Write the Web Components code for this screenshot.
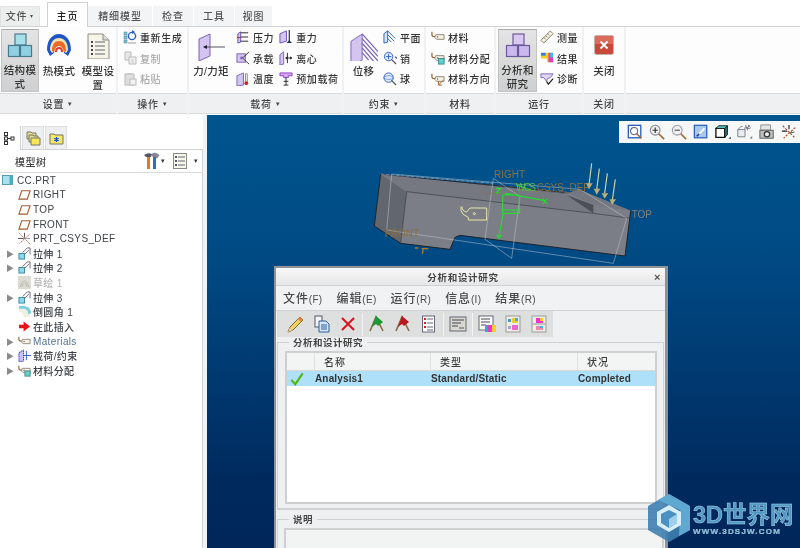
<!DOCTYPE html>
<html lang="zh">
<head>
<meta charset="utf-8">
<title>Creo Simulate</title>
<style>
  html, body { margin: 0; height: 548px; overflow: hidden; background: #fff; }
  body { font-family: "Liberation Sans", "Noto Sans CJK SC", sans-serif; font-weight: 500; color: #3a3a3a; display: flex; flex-direction: column; filter: blur(.3px); }
</style>
</head>
<body>
<script>
// icon table: name -> [viewBox size, svg content]
const cubes = (a, b, s) => `
  <g stroke="${s}" stroke-width="1.2"><rect x="8" y="1" width="11" height="11" fill="${a}"/>
  <rect x="1.5" y="12.5" width="11" height="11" fill="${b}"/><rect x="13.5" y="12.5" width="11" height="11" fill="${b}"/></g>`;
const tag = `<path d="M1 2v3q0 2 2 2h2" fill="none" stroke="#8a5a2a" stroke-width="1.2"/><path d="M5 5h9v5H6l-2-2z" fill="#f4f1e4" stroke="#8a8472"/><circle cx="7" cy="7.5" r=".8" fill="#666"/>`;
const flag = (c) => `<path d="M2 16 8 2l7 14" fill="none" stroke="#8a6a45" stroke-width="1.6"/><path d="M8 1 15 7l-5 4-2-2-4 3z" fill="${c}"/>`;
const ICONS = {
  cubes: [26, cubes("#a8e0ea", "#8fd0e2", "#4a7a90")],
  cubesp: [26, cubes("#d8c8f2", "#cbb8ee", "#6a5a98")],
  thermal: [26, `<path d="M1 17C1 6 7 1 13 1s12 5 12 16l-3 6-4-3q-1-8-5-8t-5 8l-4 3z" fill="#1d55c8"/><path d="M4 17C4 9 8 5 13 5s9 4 9 12l-2 3-3-2q-1-7-4-7t-4 7l-3 2z" fill="#f2e4b0"/><path d="M6 18C6 11 9 8 13 8s7 3 7 10l-2 1q-1-6-5-6t-5 6z" fill="#ef6a28"/><path d="M9 19q0-5 4-5t4 5l-2 0q0-3-2-3t-2 3z" fill="#e83a30"/>`],
  doc: [26, `<path d="M3 1h15l6 6v19H3z" fill="#f6f4e6" stroke="#8d8d82"/><path d="M18 1v6h6" fill="#ddd" stroke="#8d8d82"/><g fill="#445"><rect x="6" y="8" width="2" height="2"/><rect x="6" y="12" width="2" height="2"/><rect x="6" y="16" width="2" height="2"/><rect x="6" y="20" width="2" height="2"/></g><g stroke="#667"><path d="M10 9h10M10 13h10M10 17h10M10 21h10"/></g>`],
  regen: [14, `<g fill="#7bc6dc" stroke="#4a7a90" stroke-width=".5"><rect x="1" y="2" width="3" height="3"/><rect x="1" y="6" width="3" height="3"/><rect x="1" y="10" width="3" height="3"/></g><circle cx="9" cy="6" r="3.6" fill="none" stroke="#2a5fc0" stroke-width="1.4"/><path d="M9 0l3 2-3 2z" fill="#2a5fc0"/><path d="M5 13h8" stroke="#999"/>`],
  copy: [14, `<path d="M2 1h6v8H2z" fill="#e6e6e6" stroke="#bbb"/><path d="M6 6h7v7H6z" fill="#efefef" stroke="#bbb"/><path d="M8 9h3M8 11h3" stroke="#ccc"/>`],
  paste: [14, `<rect x="2" y="2" width="9" height="11" fill="#dedede" stroke="#bbb"/><rect x="4" y="1" width="5" height="2" fill="#ccc"/><rect x="7" y="7" width="6" height="6" fill="#f2f2f2" stroke="#bbb"/>`],
  force: [28, `<path d="M2 6 13 1v22L2 28z" fill="#d3c4f0" stroke="#7b63b5"/><path d="M7 14h21" stroke="#555" stroke-width="1"/><path d="M6 14l4-2v4z" fill="#223"/>`],
  pressure: [15, `<path d="M2 4 5 2v11l-3 1z" fill="#d3c4f0" stroke="#6a4fc0"/><path d="M5 3h8M5 7.5h8M5 12h8" stroke="#222"/><path d="M1 8h4" stroke="#b22"/>`],
  bearing: [15, `<rect x="1" y="3" width="9" height="9" fill="#d3c4f0" stroke="#7b63b5"/><path d="M14 1 7 7.5l7 6.5" fill="none" stroke="#333"/><circle cx="6" cy="7.5" r="1.5" fill="#7b63b5"/>`],
  temp: [15, `<path d="M1 4 8 1v13l-7 1z" fill="#d3c4f0" stroke="#7b63b5"/><rect x="10" y="2" width="2" height="9" fill="#eee" stroke="#555" stroke-width=".6"/><circle cx="11" cy="12" r="2" fill="#c22"/>`],
  gravity: [15, `<path d="M1 4 8 1v11l-7 2z" fill="#d3c4f0" stroke="#6a4fc0"/><path d="M11 0v13" stroke="#223" stroke-width="1.2"/><path d="M8 14h6l-3-3z" fill="#235"/>`],
  centri: [15, `<path d="M1 4 5 1v13l-4 1z" fill="#d3c4f0" stroke="#7b63b5"/><path d="M7 7.5h7M9 2v11" stroke="#222"/><path d="M7 7.5l2-2v4zM14 7.5l-2-2v4z" fill="#222"/>`],
  preload: [15, `<path d="M1 1h13v3h-4v2H5V4H1z" fill="#d8a8f0" stroke="#8a3fc0"/><path d="M7.5 6v8" stroke="#222"/><path d="M5 10h5M5 14h5" stroke="#222"/>`],
  disp: [30, `<path d="M1 9 13 1v28L1 35z" fill="#d3c4f0" stroke="#7b63b5"/><path d="M13 1 30 20M13 6l17 19M13 11l17 19M13 16l12 14M13 21l7 8" stroke="#7b63b5" stroke-width="1.3"/>`],
  plane: [15, `<path d="M1 4 5 1v12l-4 1z" fill="#d6e4f6" stroke="#2a5fc0"/><path d="M5 1l8 8M5 5l7 7M5 9l4 4" stroke="#2a5fc0"/>`],
  pin: [15, `<circle cx="6" cy="6" r="4.5" fill="#e4eefa" stroke="#2a5fc0"/><path d="M3 6h6M6 3v6" stroke="#2a5fc0"/><path d="M9 9l5 5M13 6l2 2" stroke="#556" stroke-width="1.4"/>`],
  ball: [15, `<circle cx="6" cy="6" r="5" fill="#e4eefa" stroke="#2a5fc0"/><ellipse cx="6" cy="6" rx="5" ry="2" fill="none" stroke="#2a5fc0" stroke-width=".6"/><path d="M9 9l5 5" stroke="#556" stroke-width="1.4"/>`],
  tag: [15, tag],
  assign: [15, tag + `<rect x="8" y="8" width="6" height="6" fill="#62d0cc" stroke="#3a8a8a"/>`],
  matdir: [15, tag + `<path d="M8 14l5-5M8 10v4h4" fill="none" stroke="#a05a30"/>`],
  measure: [15, `<path d="M1 11 11 1l3 3L4 14z" fill="#f4f0e6" stroke="#8a7a62"/><path d="M4 8l2 2M6 6l2 2M8 4l2 2" stroke="#8a7a62"/>`],
  result: [15, `<path d="M1 2h13v10H8l-1-4H1z" fill="#f4d020"/><path d="M9 2h5v10H9z" fill="#e03ac0"/><path d="M1 2h5v3H1z" fill="#2a80e0"/><path d="M11 2h3v5h-3z" fill="#3ac0f0"/>`],
  diag: [15, `<path d="M1 2h13l-3 4-3 1-1 3-3-4H1z" fill="#e2d8f6" stroke="#7b63b5"/><path d="M7 10l2 3 5-6" fill="none" stroke="#222" stroke-width="1.3"/>`],
  close: [20, `<rect x=".5" y=".5" width="19" height="19" rx="2" fill="#c8483a" stroke="#c8b0a8"/><rect x="1" y="1" width="18" height="8" fill="#dc6a5a"/><path d="M6.5 6.5l7 7M13.5 6.5l-7 7" stroke="#fff" stroke-width="2"/>`],
  zfit: [18, `<rect x="1.5" y="1.5" width="14" height="14" fill="#fff" stroke="#2a5fc0" stroke-width="1.5"/><circle cx="8" cy="8" r="4" fill="none" stroke="#667" stroke-width="1.2"/><path d="M11 11l5 5" stroke="#a06a30" stroke-width="1.8"/>`],
  zin: [18, `<circle cx="7" cy="7" r="5.5" fill="#eee" stroke="#889" stroke-width="1.2"/><path d="M4 7h6M7 4v6" stroke="#333" stroke-width="1.3"/><path d="M11 11l6 6" stroke="#a06a30" stroke-width="1.8"/>`],
  zout: [18, `<circle cx="7" cy="7" r="5.5" fill="#f2f2f2" stroke="#99a" stroke-width="1.2"/><path d="M4 7h6" stroke="#555" stroke-width="1.3"/><path d="M11 11l6 6" stroke="#a06a30" stroke-width="1.8"/>`],
  repaint: [18, `<rect x="1.5" y="1.5" width="14" height="14" fill="#a8c8ec" stroke="#2a5fc0" stroke-width="1.4"/><path d="M4 14 13 5" stroke="#fff" stroke-width="2"/><path d="M4 14l3-3" stroke="#2a4a90" stroke-width="2"/>`],
  view3d: [18, `<path d="M1 5h10v10H1z" fill="#fff" stroke="#111" stroke-width="1.5"/><path d="M1 5l3-3h10L11 5z" fill="#5cc" stroke="#111"/><path d="M11 5l3-3v10l-3 3z" fill="#2a7a80" stroke="#111"/><path d="M15 17h3v-3z" fill="#667"/>`],
  named: [20, `<path d="M1 7h9v9H1z" fill="#e8eef2" stroke="#667"/><path d="M1 7l4-4h2M10 7l3-3v4" fill="none" stroke="#667"/><text x="9" y="6" font-size="6" font-family="Liberation Sans" fill="#556">AB</text><path d="M16 18h3v-3z" fill="#667"/>`],
  camera: [18, `<path d="M2 1h11v6H2z" fill="#e4e4e4" stroke="#888"/><rect x="1" y="7" width="15" height="9" fill="#bdbdbd" stroke="#555"/><circle cx="9" cy="11.5" r="3" fill="#eee" stroke="#333" stroke-width="1.4"/>`],
  datum: [18, `<path d="M2 2l14 14M16 4 3 16" stroke="#a0522d" stroke-width="1.3" stroke-dasharray="2.5 1.5"/><path d="M1 8h6M9 1v5" stroke="#222" stroke-width="1.3"/><path d="M10 10l5-1" stroke="#444"/>`],
  tabtree: [14, `<g fill="#fff" stroke="#333"><rect x="1.5" y="1.5" width="3" height="3"/><rect x="1.5" y="6" width="3" height="3"/><rect x="8" y="6" width="3" height="3"/><rect x="1.5" y="10.5" width="3" height="3"/></g><path d="M3 5v1M3 9v1M5 7.5h3" stroke="#333"/>`],
  tabfolders: [15, `<path d="M1 1h4l1 1h4v6H1z" fill="#e8e090" stroke="#776"/><path d="M3 4h4l1 1h4v6H3z" fill="#e0dc90" stroke="#776"/><path d="M5 7h9v7H5z" fill="#f8e858" stroke="#776"/>`],
  tabstar: [15, `<path d="M1 3h4l1 1h8v9H1z" fill="#f6e860" stroke="#776"/><path d="M7.5 6v5M5.3 7.2l4.4 2.6M9.7 7.2l-4.4 2.6" stroke="#1a50d8" stroke-width="1.2"/>`],
  hammer: [18, `<path d="M2 3q4-3 8-1l-1 3H4z" fill="#556"/><path d="M5 5h3v12H5z" fill="#e07a20"/><path d="M11 5h3v12h-3z" fill="#2a70c0"/><path d="M10 2l3-1 4 2-2 3-4-1z" fill="#889" stroke="#556" stroke-width=".5"/>`],
  list: [16, `<rect x=".5" y=".5" width="13" height="15" fill="#f6f6ea" stroke="#888"/><g fill="#556"><rect x="2" y="3" width="2" height="2"/><rect x="2" y="7" width="2" height="2"/><rect x="2" y="11" width="2" height="2"/></g><path d="M5 4h7M5 8h7M5 12h7" stroke="#667"/>`],
  tplane: [14, `<path d="M1 12 4 3h9l-3 9z" fill="none" stroke="#a85a30" stroke-width="1.2"/>`],
  tcsys: [16, `<path d="M1 1l14 14M14 3 2 14" stroke="#a0522d" stroke-dasharray="2 1"/><path d="M0 8h7M8 1v6" stroke="#333"/><path d="M8 8h7" stroke="#888"/>`],
  tpart: [12, `<rect x=".5" y="1.5" width="10" height="9" fill="#a5e2ea" stroke="#5a9ab0"/><rect x="7.5" y="1.5" width="3" height="9" fill="#4ab0c8"/>`],
  extrude: [14, `<rect x="1" y="7" width="6" height="6" fill="#8ad8ea" stroke="#3a88a0"/><path d="M7 8l5-5M5 6l5-5h3v3M13 4v4" fill="none" stroke="#667"/>`],
  sketch: [14, `<rect width="14" height="14" fill="#dcdcd4"/><path d="M2 12Q7-2 12 12M4 12Q7 3 10 12" fill="none" stroke="#b8b8ac"/>`],
  round: [14, `<path d="M1 2h6q6 1 6 8v3H6q0-5-5-6z" fill="#f0f0e2"/><path d="M1 1h6q7 1 7 8l-3 1q0-5-4-6H1z" fill="#7cd0e0"/>`],
  insert: [14, `<path d="M1 5h5V1.5L13 7l-7 5.5V9H1z" fill="#e8141c"/>`],
  tload: [14, `<path d="M1 4 6 1v12l-5 1z" fill="#c8c0f4" stroke="#2a30c8" stroke-dasharray="1.5 .7"/><path d="M6 7h8M9 2v10" stroke="#2a5fc0"/>`],
  pencil: [18, `<path d="M1 17l2-5L13 2l3 3L6 15z" fill="#f0d060" stroke="#7a6a30"/><path d="M1 17l2-5 3 3z" fill="#e8c8a0"/><path d="M13 2l3 3-2 2-3-3z" fill="#d84"/>`],
  dcopy: [18, `<rect x="2" y="1" width="7" height="11" fill="#f4f4f4" stroke="#556"/><path d="M6 6h7l3 3v8H6z" fill="#d6e6f6" stroke="#2a5fa0"/><path d="M8 10h6M8 12h6M8 14h6" stroke="#2a5fa0"/>`],
  dx: [18, `<path d="M3 3l12 12M15 3 3 15" stroke="#d8141c" stroke-width="2"/>`],
  fgreen: [18, flag("#1a9a32")],
  fred: [18, flag("#b81a20")],
  dlist: [18, `<rect x="2.5" y="1" width="12" height="16" fill="#fff" stroke="#667"/><g fill="#c22"><rect x="4" y="3" width="2" height="2"/><rect x="4" y="7" width="2" height="2"/><rect x="4" y="11" width="2" height="2"/></g><path d="M7 4h6M7 8h6M7 12h6M7 15h6" stroke="#667"/>`],
  dform: [18, `<rect x="1" y="2" width="16" height="14" fill="#d8d8d0" stroke="#667"/><path d="M3 5h12M3 8h9M3 11h6" stroke="#445"/><rect x="10" y="12" width="5" height="2" fill="#999"/>`],
  dlr: [18, `<rect x="1" y="1" width="14" height="14" fill="#fff" stroke="#667"/><path d="M3 4h9M3 7h9M3 10h5" stroke="#445"/><path d="M7 10h11v7H7z" fill="#3ac"/><path d="M10 10h4v7h-4z" fill="#e3c"/><path d="M14 10h4v7h-4z" fill="#fc2"/>`],
  dr2: [18, `<rect x="2" y="1" width="14" height="16" fill="#eeeee4" stroke="#999"/><rect x="4" y="4" width="3" height="3" fill="#49c"/><rect x="4" y="11" width="3" height="3" fill="#9ac"/><path d="M8 3h6v5H8z" fill="#ec3"/><path d="M11 3h3v3h-3z" fill="#4ae"/><path d="M8 10h6v5H8z" fill="#e6c"/>`],
  dr3: [18, `<rect x="2" y="1" width="14" height="16" fill="#eeeee4" stroke="#999"/><path d="M2 9h14" stroke="#999"/><path d="M6 3h7v5H6z" fill="#e3c"/><path d="M10 3h3v3h-3z" fill="#fc2"/><path d="M6 11h7v4H6z" fill="#e8a"/><path d="M10 11h3v2h-3z" fill="#4ae"/>`],
  check: [16, `<path d="M1.5 9 6 14 14.5 1.5" fill="none" stroke="#4ab810" stroke-width="2.4"/>`],
};

class XIco extends HTMLElement {
  connectedCallback() {
    const [vb, body] = ICONS[this.getAttribute("name")];
    const size = this.getAttribute("size") || vb;
    this.attachShadow({ mode: "open" }).innerHTML = `
      <style>:host { display: block; flex: none; width: ${size}px; height: ${size}px; } svg { display: block; }</style>
      <svg width="${size}" height="${size}" viewBox="0 0 ${vb} ${vb}">${body}</svg>`;
  }
}

class RbTabs extends HTMLElement {
  connectedCallback() {
    this.attachShadow({ mode: "open" }).innerHTML = `
      <style>
        :host { display: flex; align-items: flex-end; height: 27px; box-sizing: border-box; border-bottom: 1px solid #cfd1d2; background: #fff;
          font: 500 10px "Noto Sans CJK SC", sans-serif; letter-spacing: .9px; color: #555; }
        div { height: 20px; padding-bottom: 2px; display: flex; align-items: center; justify-content: center; background: #f3f4f5; border-right: 1px solid #fff; box-sizing: border-box; }
        .file { width: 40px; background: #eceded; margin-right: 7px; border: 1px solid #e2e3e3; border-bottom: 0; }
        .on { width: 41px; background: #fff; color: #222; border: 1px solid #cfd1d2; border-bottom: 0; margin-bottom: -1px; height: 25px; padding-bottom: 0; }
        .w4 { width: 65px; } .w2 { width: 41px; } .w3 { width: 38px; }
        i { font-style: normal; margin-left: 3px; font-size: 6px; }
      </style>
      <div class="file">文件<i>▾</i></div><div class="on">主页</div><div class="w4">精细模型</div><div class="w2">检查</div><div class="w2">工具</div><div class="w3">视图</div>`;
  }
}

class RbGroup extends HTMLElement {
  connectedCallback() {
    const caret = this.hasAttribute("caret") ? `<i>▾</i>` : "";
    this.attachShadow({ mode: "open" }).innerHTML = `
      <style>
        :host { display: flex; flex-direction: column; flex: none; width: ${this.getAttribute("w")}px; border-right: 2px solid #f0f1f2; box-sizing: border-box; }
        .body { height: 66px; display: flex; align-items: stretch; gap: ${this.getAttribute("gap") || 0}px; padding: 0 0 0 ${this.getAttribute("pad") || 0}px; background: #fdfdfd; box-sizing: border-box; }
        .foot { height: 21px; display: flex; align-items: center; justify-content: center; gap: 4px; background: #eff0f2; border-top: 1px solid #d9dadb; border-bottom: 1px solid #d9dadb; color: #444; font-size: 10px; letter-spacing: .8px; box-sizing: border-box; }
        i { font-style: normal; font-size: 7px; }
      </style>
      <div class="body"><slot></slot></div>
      <div class="foot">${this.getAttribute("label")}${caret}</div>`;
  }
}

class RbLarge extends HTMLElement {
  connectedCallback() {
    const w = this.getAttribute("w") || 38;
    const on = this.hasAttribute("on");
    this.attachShadow({ mode: "open" }).innerHTML = `
      <style>
        :host { display: flex; flex-direction: column; align-items: center; flex: none; width: ${w}px; height: 63px; margin-top: 2px; box-sizing: border-box; padding-top: ${on ? 3 : 4}px;
          ${on ? "background: linear-gradient(#e4e4e4,#cfd0d1); border: 1px solid #c2c2c2; border-top-color: #aaa;" : ""} }
        .ic { height: 31px; display: flex; align-items: flex-start; justify-content: center; }
        .tx { font-size: 10.5px; line-height: 14px; letter-spacing: .3px; text-align: center; color: #333; width: 100%; word-break: break-all; }
      </style>
      <div class="ic"><slot></slot></div>
      <div class="tx">${this.getAttribute("text")}</div>`;
  }
}

class RbCol extends HTMLElement {
  connectedCallback() {
    this.attachShadow({ mode: "open" }).innerHTML = `
      <style>:host { display: flex; flex-direction: column; justify-content: center; flex: none; padding-bottom: 4px; box-sizing: border-box; }</style><slot></slot>`;
  }
}

class RbSmall extends HTMLElement {
  connectedCallback() {
    const off = this.hasAttribute("off");
    this.attachShadow({ mode: "open" }).innerHTML = `
      <style>
        :host { display: flex; align-items: center; gap: 3px; height: 21px; font-size: 10px; letter-spacing: .6px; color: ${off ? "#aaa" : "#333"}; white-space: nowrap; }
      </style>
      <x-ico name="${this.getAttribute("icon")}" size="14"></x-ico><span>${this.getAttribute("text")}</span>`;
  }
}

class SidePanel extends HTMLElement {
  connectedCallback() {
    this.attachShadow({ mode: "open" }).innerHTML = `
      <style>
        :host { display: flex; flex-direction: column; flex: none; width: 207px; height: 433px; box-sizing: border-box; background: #fff; border-right: 4px solid #f1f2f3; }
        .tabs { display: flex; gap: 1px; margin-top: 11px; height: 24px; border-bottom: 1px solid #d0d2d3; box-sizing: border-box; }
        .tab { width: 22px; display: flex; align-items: center; justify-content: center; background: #eeeff0; border: 1px solid #dedfe0; border-bottom: 0; box-sizing: border-box; }
        .tab.on { background: #fff; border: 0; border-right: 1px solid #d0d2d3; margin-bottom: -1px; width: 21px; }
        .body { flex: 1; border-right: 1px solid #cfd1d2; }
        .head { display: flex; align-items: center; height: 22px; padding: 0 0 0 15px; border-bottom: 1px solid #d9dadb; font-size: 10px; letter-spacing: .5px; color: #444; }
        .head span { flex: 1; }
        .head i { font-style: normal; font-size: 7px; margin: 0 7px 0 1px; color: #333; }
        .head i:last-child { margin: 0 4px 0 5px; }
      </style>
      <div class="tabs">
        <div class="tab on"><x-ico name="tabtree"></x-ico></div>
        <div class="tab"><x-ico name="tabfolders"></x-ico></div>
        <div class="tab"><x-ico name="tabstar"></x-ico></div>
      </div>
      <div class="body">
        <div class="head"><span>模型树</span><x-ico name="hammer"></x-ico><i>▾</i><x-ico name="list"></x-ico><i>▾</i></div>
        <div><slot></slot></div>
      </div>`;
  }
}

class TreeRow extends HTMLElement {
  connectedCallback() {
    const root = this.hasAttribute("root");
    this.attachShadow({ mode: "open" }).innerHTML = `
      <style>
        :host { display: flex; align-items: center; height: 14.62px; font-size: 10px; letter-spacing: .35px; white-space: nowrap; color: ${this.getAttribute("color") || "#3f4347"}; }
        .ar { flex: none; width: 17px; padding-left: 6px; box-sizing: border-box; font-size: 8px; color: #8a8a8a; }
        .ic { flex: none; width: 16px; padding-right: 1px; box-sizing: border-box; display: flex; justify-content: center; }
        .root { width: 17px; padding-left: 2px; box-sizing: border-box; flex: none; }
      </style>
      ${root ? "" : `<span class="ar">${this.hasAttribute("arrow") ? "▶" : ""}</span>`}
      <span class="${root ? "root" : "ic"}"><x-ico name="${this.getAttribute("icon")}" size="${root ? 12 : 13}"></x-ico></span>
      <span>${this.getAttribute("text")}</span>`;
  }
}

class GfxView extends HTMLElement {
  connectedCallback() {
    this.attachShadow({ mode: "open" }).innerHTML = `
      <style>
        :host { display: block; position: relative; flex: 1; height: 433px; overflow: hidden; background: linear-gradient(#00558f 0%, #004a84 33%, #002a5e 85%, #00265a 100%); }
        .tools { position: absolute; top: 6px; right: 0; width: 181px; height: 22px; background: #f6f7f7; display: flex; align-items: center; padding-left: 8px; box-sizing: border-box; gap: 6px; }
        .model { position: absolute; left: 153px; top: 35px; }
        text { font-family: "Liberation Sans", sans-serif; }
        .mark { position: absolute; left: 439px; top: 378px; display: flex; align-items: center; gap: 1px; }
        .mark b { display: block; margin-top: 3px; font: 700 23.5px/25px "Liberation Sans", "Noto Sans CJK SC", sans-serif; color: #5198c4; -webkit-text-stroke: .5px #a8d4ea; white-space: nowrap; }
        .mark small { display: block; font: 700 8px/8px "Liberation Sans", sans-serif; letter-spacing: 1.2px; color: #7ab6d6; -webkit-text-stroke: .2px #cfeaf6; white-space: nowrap; }
      </style>
      <div class="tools">
        <x-ico name="zfit" size="16"></x-ico><x-ico name="zin" size="16"></x-ico><x-ico name="zout" size="16"></x-ico><x-ico name="repaint" size="16"></x-ico><x-ico name="view3d" size="16"></x-ico><x-ico name="named" size="16"></x-ico><x-ico name="camera" size="16"></x-ico><x-ico name="datum" size="16"></x-ico>
      </div>
      <svg class="model" width="300" height="120" viewBox="0 0 900 360">
        <path d="M62 72 43 228 122 280 270 298 285 262 300 256 795 318 812 182 655 118 620 132 62 72Z" fill="#7b7e86"/>
        <path d="M62 72 140 125 122 280 43 228Z" fill="#62666f"/>
        <path d="M62 72 620 125 700 165 812 182 655 118 620 132Z" fill="#74777f"/>
        <path d="M62 72 140 125 700 190 700 165 620 135Z" fill="#757881"/>
        <path d="M620 135 700 165 700 190Z" fill="#4c4f57"/>
        <path d="M62 72 43 228 122 280 270 298 285 262 300 256 795 318 812 182M62 72 620 128" fill="none" stroke="#17181c" stroke-width="2.5"/>
        <path d="M140 125 700 190 812 205M140 125 122 280" fill="none" stroke="#3a3c42" stroke-width="2"/>
        <path d="M95 72 80 240 760 340 800 205 660 118ZM400 85 375 268 455 325 480 140Z" fill="none" stroke="#c4c8cc" stroke-width="1.5"/>
        <path d="M62 72 400 100" stroke="#8fb6dc" stroke-width="2" stroke-dasharray="12 3"/>
        <g stroke="#1fe02a" stroke-width="3.4" fill="none"><path d="M428 135h50v55h-50zM424 180h58M470 105l40 14M435 130 555 152M430 190 416 262"/><path d="M408 115h14l-14 14h14M548 146l14 16M562 146l-14 16M410 254l7 12 7-12"/></g>
        <text x="402" y="84" font-size="30" fill="#8a7040">RIGHT</text>
        <text x="468" y="122" font-size="30" fill="#5fc040" textLength="60">WCS</text>
        <text x="530" y="122" font-size="30" fill="#8a7040">CSYS_DEF</text>
        <text x="815" y="204" font-size="30" fill="#858270">TOP</text>
        <text x="74" y="260" font-size="30" fill="#8a7040">FRONT</text>
        <g fill="none" stroke="#ece6a0" stroke-width="3"><path d="M303 170v12q2 12 22 20v8h55v-36h-50l-10 12q-14-2-14-16"/><circle cx="343" cy="191" r="3"/></g>
        <path d="M165 294h10M190 296l-3 16M185 296h20" stroke="#b07a20" stroke-width="4"/>
        <g stroke="#d8d09a" stroke-width="3.5"><path d="M695 40 687 105M718 56 710 120M742 70 734 130M766 88 757 150"/></g>
        <g fill="#b8ae78"><path d="M678 100h20l-11 18zM701 116h20l-11 18zM725 130h20l-11 16zM748 148h20l-11 16z"/></g>
        <path d="M372 130h50" stroke="#8a6a3a" stroke-width="1.5"/><path d="M550 125h60" stroke="#8a6a3a" stroke-width="1.5" stroke-dasharray="6 3"/>
      </svg>
      <slot></slot>
      <div class="mark">
        <svg width="46" height="50" viewBox="0 0 46 50">
          <path d="M23 1 44 13v24L23 49 2 37V13Z" fill="#3f7fb0" opacity=".9"/>
          <path d="M23 1 44 13v24L33 43 34 17 12 7Z" fill="#5fa8d2"/>
          <path d="M23 12 35 19v13L23 39 11 32V19Z" fill="#d8eef8"/>
          <path d="M23 17 31 21v9L23 35 15 30v-9Z" fill="#4a90c0"/>
          <path d="M23 26 31 21v9L23 35Z" fill="#9fd0ea"/>
        </svg>
        <div><b>3D世界网</b><small>WWW.3DSJW.COM</small></div>
      </div>`;
  }
}

class AnalysisDialog extends HTMLElement {
  connectedCallback() {
    const sep = `<u></u>`;
    this.attachShadow({ mode: "open" }).innerHTML = `
      <style>
        :host { position: absolute; left: 67px; top: 151px; width: 394px; height: 290px; box-sizing: border-box; background: #eff0f1; border: 2px solid #8e9398; border-right-width: 3px; color: #3c3c3c; font-size: 10px; display: block; }
        .title { height: 18px; padding: 1px 15px 0 0; display: flex; align-items: center; justify-content: center; position: relative; font-size: 9.5px; font-weight: 700; letter-spacing: .7px; color: #444; background: linear-gradient(#f7f7f7,#e6e7e8); border-bottom: 1px solid #cfd1d2; box-sizing: border-box; }
        .title em { position: absolute; right: 4px; top: 1px; font: 700 11px/16px "Liberation Sans", sans-serif; color: #555; }
        .menu { height: 25px; display: flex; align-items: center; gap: 14px; padding: 0 0 1px 7px; box-sizing: border-box; font-size: 12px; letter-spacing: .9px; color: #4a4a4a; border-bottom: 1px solid #cfd1d2; background: #f1f2f3; }
        .menu small { font-size: 10px; letter-spacing: .3px; }
        .bar { margin-left: 1px; width: 276px; height: 26px; display: flex; align-items: center; gap: 8px; padding-left: 10px; box-sizing: border-box; background: #dedfdf; }
        .bar u { width: 1px; height: 23px; background: #f3f3f3; margin: 0 -3px; }
        fieldset { margin: 5px 1px 0 1px; padding: 0; border: 0; border-top: 1px solid #cfd1d2; border-left: 1px solid #cfd1d2; border-right: 1px solid #cfd1d2; border-bottom: 2px solid #cfd1d2; height: 168px; box-sizing: border-box; position: relative; min-width: 0; }
        .legend { position: absolute; left: 11px; top: -6px; background: #eff0f1; padding: 0 4px; font-size: 9.5px; font-weight: 700; line-height: 12px; letter-spacing: .5px; color: #444; }
        .table { margin: 8px 0 0 7px; width: 372px; height: 153px; border: 2px solid #cdcfd1; background: #fff; box-sizing: border-box; }
        .row { display: grid; grid-template-columns: 28px 116px 147px 1fr; align-items: center; }
        .hd { height: 18px; background: #f3f4f4; border-bottom: 1px solid #d6d8d9; font-size: 10px; letter-spacing: .9px; box-sizing: border-box; }
        .hd span { padding-left: 9px; height: 100%; display: flex; align-items: center; border-right: 1px solid #dfe0e1; box-sizing: border-box; }
        .hd span:last-child { border: 0; }
        .sel { height: 15px; background: #afe0f9; font: 700 10px "Liberation Sans", sans-serif; letter-spacing: .15px; color: #333; }
        .sel x-ico { margin-left: 3px; }
        .note { margin: 9px 1px 0 1px; border-top: 1px solid #cfd1d2; border-left: 1px solid #cfd1d2; position: relative; height: 40px; }
        .note .box { margin: 8px 0 0 6px; height: 40px; background: #f2f3f3; border: 2px solid #cdcfd1; border-bottom: 0; }
      </style>
      <div class="title">分析和设计研究<em>×</em></div>
      <div class="menu"><span>文件<small>(F)</small></span><span>编辑<small>(E)</small></span><span>运行<small>(R)</small></span><span>信息<small>(I)</small></span><span>结果<small>(R)</small></span></div>
      <div class="bar">
        <x-ico name="pencil" size="18"></x-ico><x-ico name="dcopy" size="18"></x-ico><x-ico name="dx" size="18"></x-ico>${sep}<x-ico name="fgreen" size="18"></x-ico><x-ico name="fred" size="18"></x-ico><x-ico name="dlist" size="18"></x-ico>${sep}<x-ico name="dform" size="18"></x-ico>${sep}<x-ico name="dlr" size="18"></x-ico><x-ico name="dr2" size="18"></x-ico><x-ico name="dr3" size="18"></x-ico>
      </div>
      <fieldset>
        <div class="legend">分析和设计研究</div>
        <div class="table">
          <div class="row hd"><span></span><span>名称</span><span>类型</span><span>状况</span></div>
          <div class="row sel"><x-ico name="check" size="14"></x-ico><span>Analysis1</span><span>Standard/Static</span><span>Completed</span></div>
        </div>
      </fieldset>
      <div class="note"><div class="legend">说明</div><div class="box"></div></div>`;
  }
}

customElements.define("x-ico", XIco);
customElements.define("rb-tabs", RbTabs);
customElements.define("rb-group", RbGroup);
customElements.define("rb-large", RbLarge);
customElements.define("rb-col", RbCol);
customElements.define("rb-small", RbSmall);
customElements.define("side-panel", SidePanel);
customElements.define("tree-row", TreeRow);
customElements.define("gfx-view", GfxView);
customElements.define("analysis-dialog", AnalysisDialog);
</script>

<rb-tabs></rb-tabs>
<div style="display:flex;height:88px;background:#fdfdfd">
  <rb-group w="118" label="设置" caret pad="1" gap="1">
    <rb-large on text="结构模式"><x-ico name="cubes"></x-ico></rb-large>
    <rb-large w="38" text="热模式"><x-ico name="thermal"></x-ico></rb-large>
    <rb-large w="38" text="模型设置"><x-ico name="doc"></x-ico></rb-large>
  </rb-group>
  <rb-group w="71" label="操作" caret pad="5">
    <rb-col>
      <rb-small icon="regen" text="重新生成"></rb-small>
      <rb-small off icon="copy" text="复制"></rb-small>
      <rb-small off icon="paste" text="粘贴"></rb-small>
    </rb-col>
  </rb-group>
  <rb-group w="155" label="载荷" caret pad="1" gap="4">
    <rb-large w="42" text="力/力矩"><x-ico name="force"></x-ico></rb-large>
    <rb-col>
      <rb-small icon="pressure" text="压力"></rb-small>
      <rb-small icon="bearing" text="承载"></rb-small>
      <rb-small icon="temp" text="温度"></rb-small>
    </rb-col>
    <rb-col style="margin-left:1px">
      <rb-small icon="gravity" text="重力"></rb-small>
      <rb-small icon="centri" text="离心"></rb-small>
      <rb-small icon="preload" text="预加载荷"></rb-small>
    </rb-col>
  </rb-group>
  <rb-group w="82" label="约束" caret pad="3" gap="3">
    <rb-large w="33" text="位移"><x-ico name="disp" size="28"></x-ico></rb-large>
    <rb-col>
      <rb-small icon="plane" text="平面"></rb-small>
      <rb-small icon="pin" text="销"></rb-small>
      <rb-small icon="ball" text="球"></rb-small>
    </rb-col>
  </rb-group>
  <rb-group w="70" label="材料" pad="5">
    <rb-col>
      <rb-small icon="tag" text="材料"></rb-small>
      <rb-small icon="assign" text="材料分配"></rb-small>
      <rb-small icon="matdir" text="材料方向"></rb-small>
    </rb-col>
  </rb-group>
  <rb-group w="88" label="运行" pad="2" gap="3">
    <rb-large on w="39" text="分析和研究"><x-ico name="cubesp"></x-ico></rb-large>
    <rb-col>
      <rb-small icon="measure" text="测量"></rb-small>
      <rb-small icon="result" text="结果"></rb-small>
      <rb-small icon="diag" text="诊断"></rb-small>
    </rb-col>
  </rb-group>
  <rb-group w="42" label="关闭" pad="1">
    <rb-large w="38" text="关闭"><x-ico name="close" size="20" style="margin-top:2px"></x-ico></rb-large>
  </rb-group>
  <div style="flex:1;display:flex;flex-direction:column">
    <div style="height:66px"></div>
    <div style="height:21px;background:#eff0f2;border-top:1px solid #d9dadb;border-bottom:1px solid #d9dadb;box-sizing:border-box"></div>
  </div>
</div>
<div style="display:flex">
  <side-panel>
    <tree-row root icon="tpart" text="CC.PRT"></tree-row>
    <tree-row icon="tplane" text="RIGHT"></tree-row>
    <tree-row icon="tplane" text="TOP"></tree-row>
    <tree-row icon="tplane" text="FRONT"></tree-row>
    <tree-row icon="tcsys" text="PRT_CSYS_DEF"></tree-row>
    <tree-row arrow icon="extrude" text="拉伸 1"></tree-row>
    <tree-row arrow icon="extrude" text="拉伸 2"></tree-row>
    <tree-row icon="sketch" color="#b4b4b4" text="草绘 1"></tree-row>
    <tree-row arrow icon="extrude" text="拉伸 3"></tree-row>
    <tree-row icon="round" text="倒圆角 1"></tree-row>
    <tree-row icon="insert" text="在此插入"></tree-row>
    <tree-row arrow icon="tag" color="#54708c" text="Materials"></tree-row>
    <tree-row arrow icon="tload" text="载荷/约束"></tree-row>
    <tree-row arrow icon="assign" text="材料分配"></tree-row>
  </side-panel>
  <gfx-view><analysis-dialog></analysis-dialog></gfx-view>
</div>
</body>
</html>
